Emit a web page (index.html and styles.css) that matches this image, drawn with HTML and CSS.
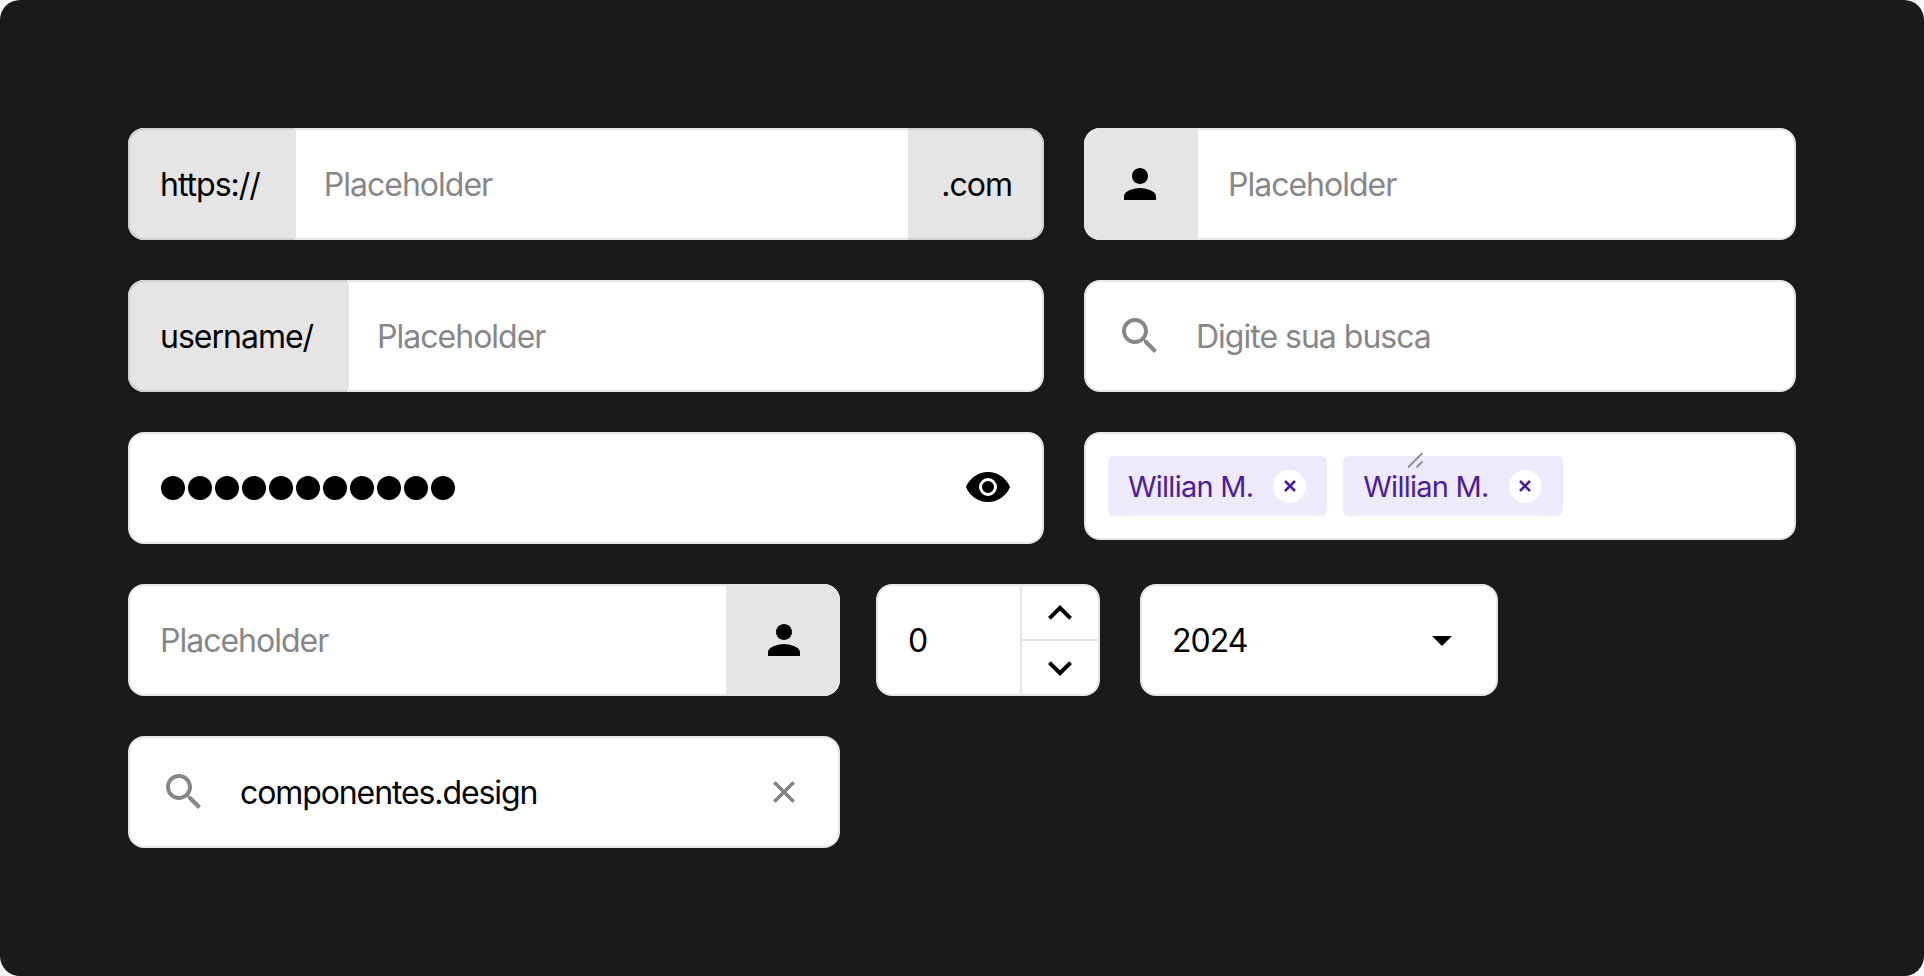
FILE: index.html
```html
<!DOCTYPE html>
<html lang="en">
<head>
    <meta charset="UTF-8">
    <title>Inputs</title>
    <link rel="stylesheet" href="styles.css">
</head>
<body>
    <div class="canvas">
        <div class="row">
            <div class="field wide">
                <span class="addon outlined first">https://</span>
                <span class="value muted">Placeholder</span>
                <span class="addon outlined last">.com</span>
            </div>
            <div class="field">
                <span class="addon first icon-addon">
                    <svg class="icon" viewBox="0 0 24 24"><path d="M12 12c2.21 0 4-1.79 4-4s-1.79-4-4-4-4 1.79-4 4 1.79 4 4 4zm0 2c-2.67 0-8 1.34-8 4v2h16v-2c0-2.66-5.33-4-8-4z"/></svg>
                </span>
                <span class="value muted">Placeholder</span>
            </div>
        </div>

        <div class="row">
            <div class="field wide">
                <span class="addon outlined first">username/</span>
                <span class="value muted">Placeholder</span>
            </div>
            <div class="field padded">
                <svg class="icon gray" viewBox="0 0 24 24"><path d="M15.5 14h-.79l-.28-.27C15.41 12.59 16 11.11 16 9.5 16 5.91 13.09 3 9.5 3S3 5.91 3 9.5 5.91 16 9.5 16c1.61 0 3.09-.59 4.23-1.57l.27.28v.79l5 4.99L20.49 19l-4.99-5zm-6 0C7.01 14 5 11.99 5 9.5S7.01 5 9.5 5 14 7.01 14 9.5 11.99 14 9.5 14z"/></svg>
                <span class="value muted">Digite sua busca</span>
            </div>
        </div>

        <div class="row">
            <div class="field wide padded">
                <div class="dots" aria-label="password">
                    <i></i><i></i><i></i><i></i><i></i><i></i><i></i><i></i><i></i><i></i><i></i>
                </div>
                <svg class="icon eye" viewBox="0 0 24 24"><path d="M12 4.5C7 4.5 2.73 7.61 1 12c1.73 4.39 6 7.5 11 7.5s9.27-3.11 11-7.5c-1.73-4.39-6-7.5-11-7.5zM12 16.5a4.5 4.5 0 1 1 0-9 4.5 4.5 0 0 1 0 9zm0-7.5a3 3 0 1 0 0 6 3 3 0 0 0 0-6z" fill-rule="evenodd"/></svg>
            </div>
            <div class="field tags">
                <span class="tag">Willian M.
                    <span class="tag-close"><svg viewBox="0 0 14 14"><path d="M2 2l10 10M12 2L2 12"/></svg></span>
                </span>
                <span class="tag">Willian M.
                    <span class="tag-close"><svg viewBox="0 0 14 14"><path d="M2 2l10 10M12 2L2 12"/></svg></span>
                </span>
                <svg class="grip" viewBox="0 0 15 15"><path d="M0 14.500L14.500 0M8.500 14.500L14.500 8.500"/></svg>
            </div>
        </div>

        <div class="row tight">
            <div class="field half">
                <span class="value muted">Placeholder</span>
                <span class="addon last icon-addon">
                    <svg class="icon" viewBox="0 0 24 24"><path d="M12 12c2.21 0 4-1.79 4-4s-1.79-4-4-4-4 1.79-4 4 1.79 4 4 4zm0 2c-2.67 0-8 1.34-8 4v2h16v-2c0-2.66-5.33-4-8-4z"/></svg>
                </span>
            </div>
            <div class="field stepper">
                <span class="value">0</span>
                <div class="stepper-btns">
                    <span class="stepper-btn"><svg class="icon" viewBox="0 0 24 24"><path d="M12 8l-6 6 1.410 1.410L12 10.830l4.590 4.580L18 14z"/></svg></span>
                    <span class="stepper-btn"><svg class="icon" viewBox="0 0 24 24"><path d="M16.590 8.590L12 13.170 7.410 8.590 6 10l6 6 6-6z"/></svg></span>
                </div>
            </div>
            <div class="field select padded">
                <span class="value flush">2024</span>
                <svg class="icon" viewBox="0 0 24 24"><path d="M7 10l5 5 5-5z"/></svg>
            </div>
        </div>

        <div class="row">
            <div class="field half padded clear">
                <svg class="icon gray" viewBox="0 0 24 24"><path d="M15.5 14h-.79l-.28-.27C15.41 12.59 16 11.11 16 9.5 16 5.91 13.09 3 9.5 3S3 5.91 3 9.5 5.91 16 9.5 16c1.61 0 3.09-.59 4.23-1.57l.27.28v.79l5 4.99L20.49 19l-4.99-5zm-6 0C7.01 14 5 11.99 5 9.5S7.01 5 9.5 5 14 7.01 14 9.5 11.99 14 9.5 14z"/></svg>
                <span class="value">componentes.design</span>
                <svg class="icon small gray" viewBox="0 0 24 24"><path d="M19 6.410L17.590 5 12 10.590 6.410 5 5 6.410 10.590 12 5 17.590 6.410 19 12 13.410 17.590 19 19 17.590 13.410 12z"/></svg>
            </div>
        </div>
    </div>
</body>
</html>
```

FILE: styles.css
```css
* {
    box-sizing: border-box;
}

html, body {
    margin: 0;
    height: 100%;
    background: #f7f7f7;
}

body {
    font-family: 'Inter', 'Liberation Sans', sans-serif;
    font-size: 32px;
    letter-spacing: -1px;
    color: #000;
    overflow: hidden;
}

.canvas {
    height: 976px;
    background: #1a1a1a;
    border-radius: 20px;
    padding: 128px;
    display: flex;
    flex-direction: column;
    gap: 40px;
}

.row {
    display: flex;
    align-items: flex-start;
    gap: 40px;
}

.row.tight {
    gap: 36px;
}

.field {
    width: 712px;
    height: 112px;
    background: #fff;
    border: 2px solid #e5e5e5;
    border-radius: 16px;
    display: flex;
    align-items: center;
    position: relative;
}

.field.wide {
    width: 916px;
}

.field.half {
    width: 712px;
}

.field.padded {
    padding: 0 30px;
}

.field.padded .icon + .value {
    padding-left: 32px;
}

.field.clear {
    padding-right: 36px;
}

.field.clear .value {
    letter-spacing: -1.1px;
}

.value {
    flex: 1;
    padding-left: 30px;
    white-space: nowrap;
}

.value.flush {
    padding-left: 0;
}

.muted {
    color: #87878a;
}

.addon {
    align-self: stretch;
    background: #e5e5e5;
    display: flex;
    align-items: center;
    padding: 0 30px;
    margin: -2px 0;
}

.addon.first {
    margin-left: -2px;
    padding-left: 32px;
    border-radius: 16px 0 0 16px;
}

.addon.last {
    margin-right: -2px;
    padding-right: 32px;
    border-radius: 0 16px 16px 0;
}

.addon.outlined {
    border: 2px solid #cfcfcf;
    border-left-width: 0;
    border-right-width: 0;
}

.addon.outlined.first {
    border-left-width: 2px;
    padding-left: 30px;
    padding-right: 34px;
    box-shadow: 2px 0 0 #e5e5e5;
}

.addon.outlined.last {
    border-right-width: 2px;
    padding-left: 33px;
    padding-right: 30px;
}

.addon.first.icon-addon {
    padding: 0 34px 0 32px;
}

.addon.last.icon-addon {
    padding: 0 32px 0 34px;
}

.icon {
    width: 48px;
    height: 48px;
    flex-shrink: 0;
    fill: #000;
    display: block;
}

.icon.gray {
    fill: #87878a;
}

.icon.small {
    width: 36px;
    height: 36px;
    stroke: #87878a;
    stroke-width: 0.6;
}

.icon.eye {
    margin-top: -3px;
}

.dots {
    flex: 1;
    display: flex;
    gap: 3px;
    margin-left: 1px;
}

.dots i {
    width: 24px;
    height: 24px;
    border-radius: 50%;
    background: #000;
}

.tags {
    height: 108px;
    padding: 0 22px;
    gap: 16px;
}

.tag {
    height: 60px;
    background: #edeafb;
    color: #4c1d95;
    font-size: 29px;
    letter-spacing: -0.75px;
    border-radius: 6px;
    display: flex;
    align-items: center;
    gap: 20px;
    padding: 0 21px 0 20px;
}

.tag-close {
    width: 33px;
    height: 33px;
    background: #fff;
    border-radius: 50%;
    display: flex;
    align-items: center;
    justify-content: center;
}

.tag-close svg {
    width: 14px;
    height: 14px;
    fill: none;
    stroke: #4c1d95;
    stroke-width: 2.6;
}

.grip {
    position: absolute;
    left: 322px;
    top: 19px;
    width: 15px;
    height: 15px;
    fill: none;
    stroke: #87878a;
    stroke-width: 1.8;
}

.stepper {
    width: 224px;
}

.stepper-btns {
    width: 78px;
    align-self: stretch;
    border-left: 2px solid #e5e5e5;
    display: flex;
    flex-direction: column;
}

.stepper-btn {
    flex: 1;
    display: flex;
    align-items: center;
    justify-content: center;
}

.stepper-btn:first-child {
    border-bottom: 2px solid #e5e5e5;
}

.select {
    width: 358px;
    margin-left: 4px;
}
```
